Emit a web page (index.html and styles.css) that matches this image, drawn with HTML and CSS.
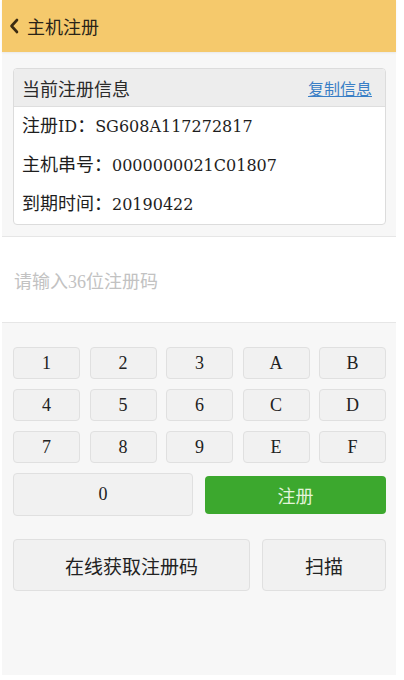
FILE: index.html
```html
<!DOCTYPE html>
<html lang="zh-CN">
<head>
<meta charset="utf-8">
<title>主机注册</title>
<link rel="stylesheet" href="styles.css">
</head>
<body>
<div class="screen">
  <header class="topbar">
    <svg class="back" width="10" height="16" viewBox="0 0 10 16"><path d="M8 2 L2.5 8 L8 14" fill="none" stroke="#3a2a12" stroke-width="2.6" stroke-linecap="round" stroke-linejoin="round"/></svg>
    <span class="title">主机注册</span>
  </header>

  <section class="info">
    <div class="card">
      <div class="card-head">
        <span>当前注册信息</span>
        <a class="copy" href="#">复制信息</a>
      </div>
      <div class="row">注册<span class="v">ID</span>：<span class="v">SG608A117272817</span></div>
      <div class="row">主机串号：<span class="v">0000000021C01807</span></div>
      <div class="row">到期时间：<span class="v">20190422</span></div>
    </div>
  </section>

  <div class="input-area">
    <span class="placeholder">请输入36位注册码</span>
  </div>

  <section class="pad">
    <div class="keys">
      <button class="key">1</button>
      <button class="key">2</button>
      <button class="key">3</button>
      <button class="key">A</button>
      <button class="key">B</button>
      <button class="key">4</button>
      <button class="key">5</button>
      <button class="key">6</button>
      <button class="key">C</button>
      <button class="key">D</button>
      <button class="key">7</button>
      <button class="key">8</button>
      <button class="key">9</button>
      <button class="key">E</button>
      <button class="key">F</button>
    </div>
    <div class="last-row">
      <button class="key zero">0</button>
      <button class="register">注册</button>
    </div>
    <div class="actions">
      <button class="act online">在线获取注册码</button>
      <button class="act scan">扫描</button>
    </div>
  </section>
</div>
</body>
</html>
```

FILE: styles.css
```css
html, body {
  margin: 0;
  padding: 0;
  background: #ffffff;
}
body {
  font-family: "Liberation Serif", "Noto Sans CJK SC", serif;
  color: #222;
}
.screen {
  width: 394px;
  height: 675px;
  margin-left: 2px;
  background: #f7f7f7;
  display: flex;
  flex-direction: column;
}
.topbar {
  height: 52px;
  flex: none;
  background: #f5c96c;
  display: flex;
  align-items: center;
  padding-left: 7px;
  box-shadow: 0 1px 2px rgba(0,0,0,0.06);
}
.back {
  display: block;
  margin-right: 8px;
}
.title {
  font-size: 18px;
  color: #2a2418;
}
.info {
  padding: 16px 10px 11px 11px;
  border-bottom: 1px solid #e6e6e6;
}
.card {
  background: #fff;
  border: 1px solid #dcdcdc;
  border-radius: 4px;
  overflow: hidden;
}
.card-head {
  height: 37px;
  background: #ededed;
  border-bottom: 1px solid #dedede;
  display: flex;
  align-items: center;
  justify-content: space-between;
  padding: 0 13px 0 8px;
  font-size: 18px;
  color: #2a2a2a;
}
.copy {
  font-size: 16px;
  color: #3a7fc6;
  text-decoration: underline;
}
.row {
  height: 39px;
  line-height: 39px;
  padding-left: 8px;
  font-size: 18px;
  color: #1e1e1e;
}
.v {
  font-family: "DejaVu Serif", serif;
  font-size: 16px;
}
.input-area {
  height: 85px;
  flex: none;
  background: #fff;
  border-bottom: 1px solid #e6e6e6;
  display: flex;
  align-items: center;
  padding-left: 12px;
}
.placeholder {
  font-size: 18px;
  color: #c2c2c2;
}
.pad {
  padding: 24px 10px 0 11px;
}
button {
  font-family: "Liberation Serif", "Noto Sans CJK SC", serif;
  cursor: pointer;
}
.keys {
  display: grid;
  grid-template-columns: repeat(5, 1fr);
  column-gap: 9.5px;
  row-gap: 10px;
}
.key {
  height: 32px;
  background: #f1f1f1;
  border: 1px solid #e0e0e0;
  border-radius: 4px;
  font-size: 18px;
  color: #222;
  padding: 0;
}
.last-row {
  display: grid;
  grid-template-columns: 180px 1fr;
  column-gap: 12px;
  margin-top: 10px;
  align-items: center;
}
.key.zero {
  height: 43px;
}
.register {
  height: 38px;
  background: #3ca82e;
  border: none;
  border-radius: 4px;
  color: #e2f4da;
  font-size: 18px;
  padding: 0;
}
.actions {
  display: grid;
  grid-template-columns: 237px 1fr;
  column-gap: 12px;
  margin-top: 23px;
}
.act {
  height: 52px;
  background: #f1f1f1;
  border: 1px solid #e0e0e0;
  border-radius: 4px;
  font-size: 19px;
  color: #222;
  padding: 0;
}
```
